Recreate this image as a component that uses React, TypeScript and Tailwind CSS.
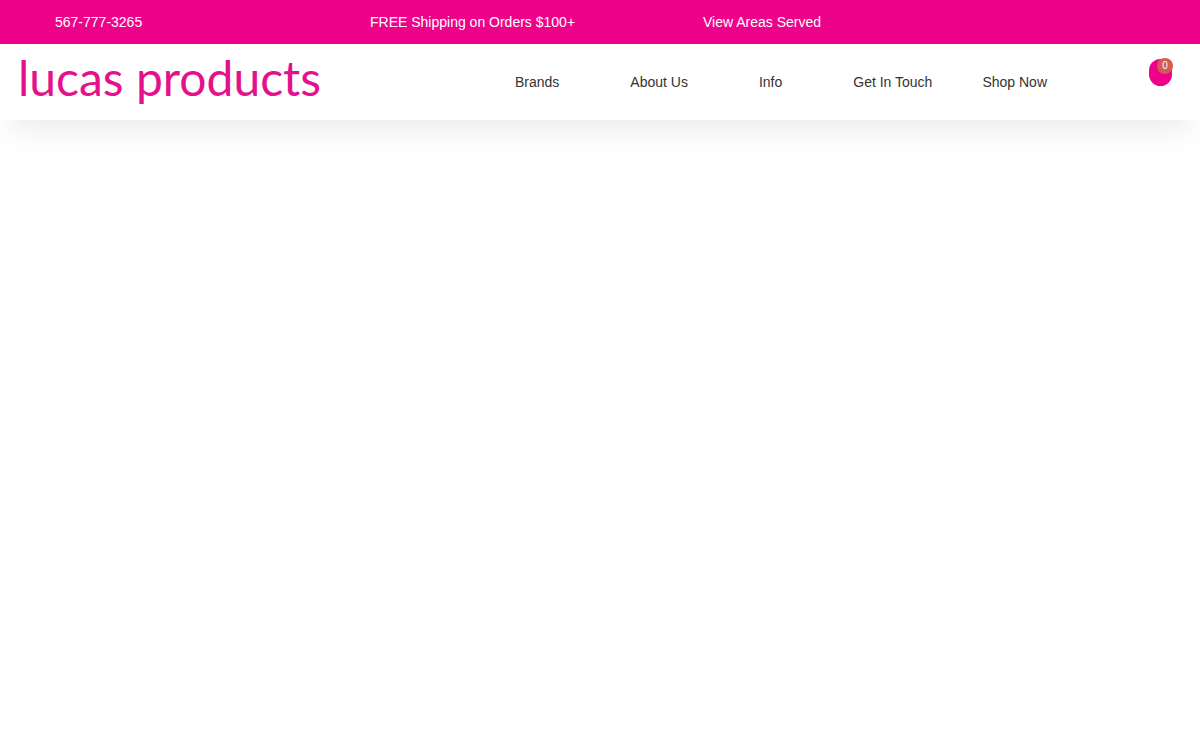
const topLinks = ["567-777-3265", "FREE Shipping on Orders $100+", "View Areas Served"];

const menuLinks = ["Brands", "About Us", "Info", "Get In Touch"];

export default function App() {
  return (
    <div className="min-h-screen bg-white font-['Liberation_Sans',Arial,sans-serif] text-sm leading-5">
      <div className="grid grid-cols-[315fr_333fr_497fr] bg-[#ee0289] py-3 pl-[55px] text-white">
        {topLinks.map((label) => (
          <div key={label}>
            <a href="#">{label}</a>
          </div>
        ))}
      </div>
      <header className="flex items-start justify-between bg-white pr-7 pl-[18px] shadow-[0_20px_30px_-10px_rgba(0,0,0,0.08)]">
        <a
          href="#"
          className="pt-1 pb-3 font-['Lato',sans-serif] text-[48px] leading-[60px] text-[#e5118c]"
        >
          lucas products
        </a>
        <div className="flex items-start">
          <nav className="mr-[102px] flex gap-[50px] pt-7 text-[#333333]">
            <div className="flex gap-[71px]">
              {menuLinks.map((label) => (
                <a key={label} href="#">
                  {label}
                </a>
              ))}
            </div>
            <a href="#">Shop Now</a>
          </nav>
          <button
            type="button"
            aria-label="Shopping cart"
            className="relative mt-[15px] h-[27px] w-[23px] rounded-xl bg-[#ee0289]"
          >
            <span className="absolute -top-px -right-px size-4 rounded-full bg-[#d25b53] text-center text-[10px] leading-4 text-white">
              0
            </span>
          </button>
        </div>
      </header>
    </div>
  );
}
